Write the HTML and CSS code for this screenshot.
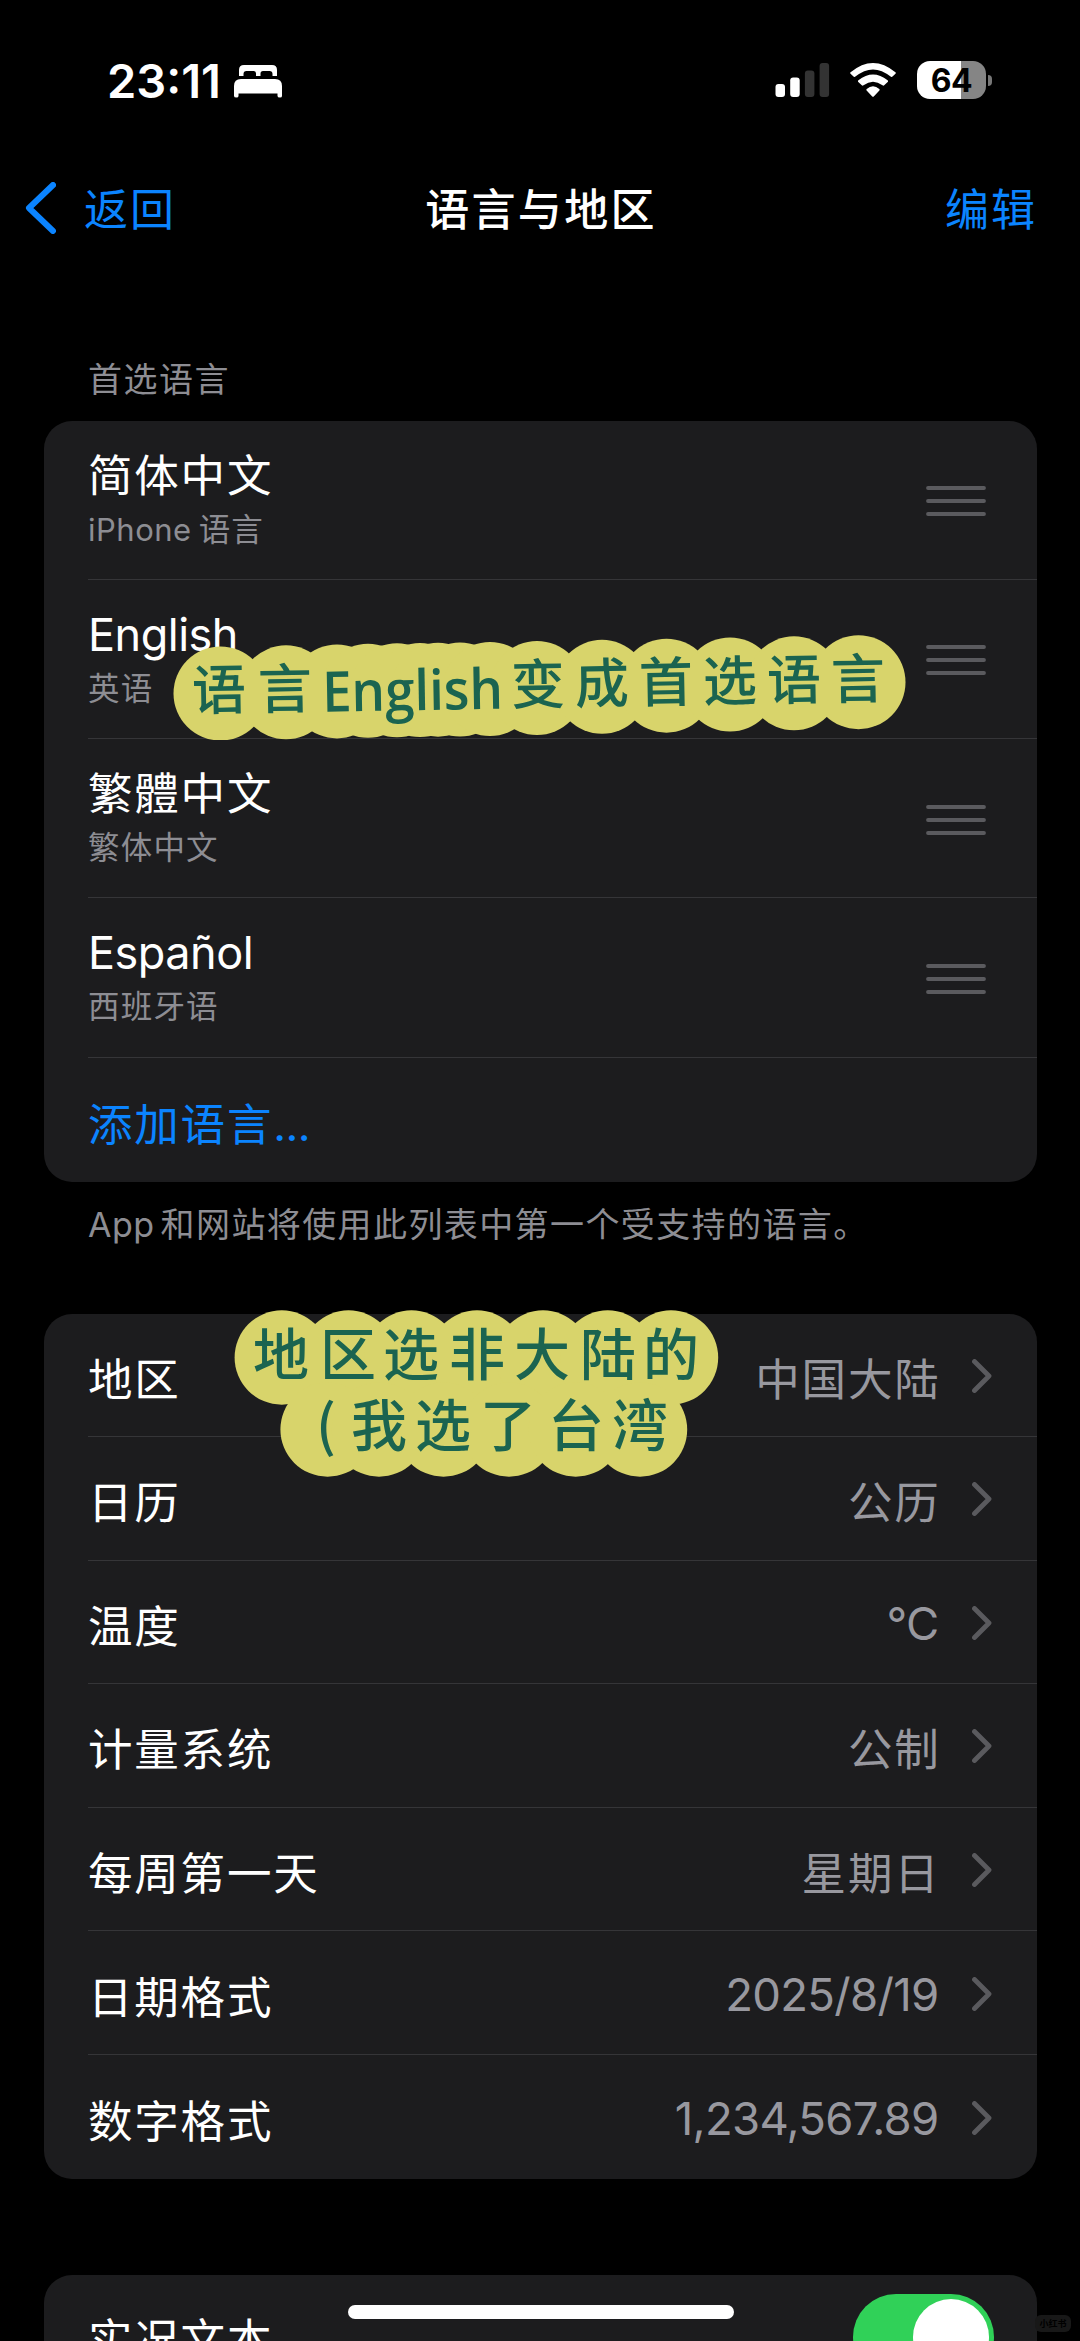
FILE: index.html
```html
<!DOCTYPE html>
<html lang="zh-CN">
<head>
<meta charset="utf-8">
<title>语言与地区</title>
<link rel="stylesheet" href="styles.css">
</head>
<body>
<svg class="defs" width="0" height="0" aria-hidden="true">
  <symbol id="grip" viewBox="0 0 60 32"><path d="M2 3H58M2 16H58M2 29H58" fill="none" stroke="currentColor" stroke-width="3.8" stroke-linecap="round"/></symbol>
  <symbol id="chev" viewBox="0 0 20 34"><path d="M2.5 2.5L17 17L2.5 31.5" fill="none" stroke="currentColor" stroke-width="4.8" stroke-linecap="round" stroke-linejoin="round"/></symbol>
</svg>
<div class="screen">
  <header class="status">
    <span class="time">23:11</span>
    <svg class="bed" viewBox="0 0 48 33"><path d="M5 11V5Q5 0 10 0H38Q43 0 43 5V11H38.5V9Q38.5 6 35.500 6H29Q26.500 6 26.500 8.500V11H22V8.500Q22 6 19.500 6H12.500Q9.500 6 9.500 9V11ZM0 31V21Q0 14 7 14H41Q48 14 48 21V31Q48 32.500 46 32.500Q43.500 32.500 43.500 31V28.500H4.500V31Q4.500 32.500 2.500 32.500Q0 32.500 0 31Z" fill="#fff"/></svg>
    <div class="indicators">
      <svg class="signal" viewBox="0 0 55 34"><g fill="#fff"><rect x="0.500" y="21" width="9.500" height="13" rx="3"/><rect x="15.200" y="14.500" width="9.500" height="19.500" rx="3"/></g><g fill="#333"><rect x="29.900" y="7.500" width="9.500" height="26.500" rx="3"/><rect x="44.600" y="0" width="9.500" height="34" rx="3"/></g></svg>
      <svg class="wifi" viewBox="0 0 46 34"><path d="M0.600 9.300Q23 -9.300 45.400 9.300Q46.200 10 45.500 10.700L42.200 13.700Q41.400 14.300 40.600 13.600Q23 -0.800 5.400 13.600Q4.600 14.300 3.800 13.700L0.500 10.700Q-0.200 10 0.600 9.300ZM8.400 17.300Q23 5.800 37.600 17.300Q38.500 18.100 37.700 18.900L34.200 22.300Q33.400 23 32.500 22.300Q23 15.200 13.500 22.300Q12.600 23 11.800 22.300L8.300 18.900Q7.500 18.100 8.400 17.300ZM16.700 26Q23 20.600 29.300 26Q30 26.700 29.400 27.400L24 33.300Q23 34.300 22 33.300L16.600 27.400Q16 26.700 16.700 26Z" fill="#fff"/></svg>
      <div class="battery"><div class="cell">64</div><div class="nub"></div></div>
    </div>
  </header>

  <nav class="nav">
    <a class="back"><svg class="back-arrow" viewBox="0 0 31 52"><path d="M28 3L4 26L28 49" fill="none" stroke="currentColor" stroke-width="6" stroke-linecap="round" stroke-linejoin="round"/></svg><span class="label">返回</span></a>
    <h1 class="title">语言与地区</h1>
    <a class="edit">编辑</a>
  </nav>

  <main>
    <h2 class="caption">首选语言</h2>
    <section class="card languages">
      <div class="row"><div class="names"><span class="name">简体中文</span><span class="sub"><span class="latin">iPhone</span>语言</span></div><svg class="grip"><use href="#grip"/></svg></div>
      <div class="row"><div class="names"><span class="name en">English</span><span class="sub">英语</span></div><svg class="grip"><use href="#grip"/></svg></div>
      <div class="row"><div class="names"><span class="name" lang="zh-TW">繁體中文</span><span class="sub">繁体中文</span></div><svg class="grip"><use href="#grip"/></svg></div>
      <div class="row"><div class="names"><span class="name en">Español</span><span class="sub">西班牙语</span></div><svg class="grip"><use href="#grip"/></svg></div>
      <div class="row add"><span>添加语言<span class="dots">...</span></span></div>
    </section>
    <p class="footnote"><span class="latin">App</span>和网站将使用此列表中第一个受支持的语言。</p>

    <section class="card formats">
      <div class="row"><span class="name">地区</span><span class="value">中国大陆</span><svg class="chev"><use href="#chev"/></svg></div>
      <div class="row"><span class="name">日历</span><span class="value">公历</span><svg class="chev"><use href="#chev"/></svg></div>
      <div class="row"><span class="name">温度</span><span class="value num">°C</span><svg class="chev"><use href="#chev"/></svg></div>
      <div class="row"><span class="name">计量系统</span><span class="value">公制</span><svg class="chev"><use href="#chev"/></svg></div>
      <div class="row"><span class="name">每周第一天</span><span class="value">星期日</span><svg class="chev"><use href="#chev"/></svg></div>
      <div class="row"><span class="name">日期格式</span><span class="value num">2025/8/19</span><svg class="chev"><use href="#chev"/></svg></div>
      <div class="row"><span class="name">数字格式</span><span class="value num">1,234,567.89</span><svg class="chev"><use href="#chev"/></svg></div>
    </section>

    <section class="card live">
      <div class="row"><span class="name">实况文本</span><span class="toggle"><span class="knob"></span></span></div>
    </section>
  </main>

  <svg class="note note-language" viewBox="0 0 740 110">
    <g class="cloud" transform="translate(-170 -630)">
      <circle cx="220.500" cy="693.500" r="47"/><circle cx="286" cy="692.300" r="47"/><circle cx="337" cy="691.400" r="47"/><circle cx="368" cy="690.800" r="47"/><circle cx="397" cy="690.300" r="47"/><circle cx="420" cy="690" r="47"/><circle cx="438" cy="689.700" r="47"/><circle cx="460" cy="689.500" r="47"/><circle cx="490" cy="689" r="47"/><circle cx="537" cy="688" r="47"/><circle cx="602" cy="686.800" r="47"/><circle cx="666.500" cy="685.700" r="47"/><circle cx="730" cy="684.500" r="47"/><circle cx="794" cy="683.300" r="47"/><circle cx="858.500" cy="682.200" r="47"/>
    </g>
    <g transform="translate(-170 -630) rotate(-1 540 688)">
      <text class="ink" y="704" x="219 285">语言</text>
      <text class="ink-latin" x="322" y="708" textLength="181" lengthAdjust="spacingAndGlyphs">English</text>
      <text class="ink" y="704" x="538 602 666 730 794 858">变成首选语言</text>
    </g>
  </svg>
  <svg class="note note-region" viewBox="0 0 500 180">
    <g class="cloud" transform="translate(-230 -1300)">
      <circle cx="281.800" cy="1357.500" r="47.200"/><circle cx="348.500" cy="1357.500" r="47.200"/><circle cx="411.500" cy="1357.500" r="47.200"/><circle cx="477" cy="1357.500" r="47.200"/><circle cx="543" cy="1357.500" r="47.200"/><circle cx="607.700" cy="1357.500" r="47.200"/><circle cx="671" cy="1357.500" r="47.200"/>
      <circle cx="327.600" cy="1429.500" r="47.200"/><circle cx="379" cy="1429.500" r="47.200"/><circle cx="443.500" cy="1429.500" r="47.200"/><circle cx="509" cy="1429.500" r="47.200"/><circle cx="575.700" cy="1429.500" r="47.200"/><circle cx="640" cy="1429.500" r="47.200"/>
    </g>
    <g transform="translate(-230 -1300)">
      <text class="ink wide" y="1375" x="281 348 411 477 542 608 671">地区选非大陆的</text>
      <text class="ink wide" y="1446" x="326 379 443 508 576 640">(我选了台湾</text>
    </g>
  </svg>
  <div class="home-bar"></div>
  <div class="stamp">小红书</div>
</div>
</body>
</html>
```
FILE: styles.css
```css
* { box-sizing: border-box; }
body {
  margin: 0;
  background: #000;
  color: #fff;
  font-family: Inter, "Noto Sans CJK SC", sans-serif;
}
.defs { position: absolute; }
.screen { position: relative; width: 1080px; height: 2341px; overflow: hidden; }

.status { display: flex; align-items: flex-start; height: 128px; padding: 61px 88px 0 107px; }
.time { width: 127px; font-size: 47px; font-weight: 600; line-height: 39px; letter-spacing: 0; white-space: nowrap; }
.bed { width: 48px; height: 33px; margin-top: 4px; }
.indicators { display: flex; margin-left: auto; }
.signal { width: 55px; height: 34px; margin-top: 2px; }
.wifi { width: 46px; height: 34px; margin: 2px 21px 0 20px; }
.battery { display: flex; align-items: center; gap: 2px; height: 38px; }
.cell {
  width: 69px; height: 38px; border-radius: 13px;
  background: linear-gradient(90deg, #fff 44px, #858585 44px);
  color: #000; font-size: 32px; font-weight: 700; line-height: 39px; text-align: center; letter-spacing: -0.5px;
}
.nub { width: 4px; height: 11px; border-radius: 0 5px 5px 0; background: #777; }

.nav { display: grid; grid-template-columns: 1fr auto 1fr; align-items: center; height: 160px; padding: 0 43px 0 25px; font-size: 44px; letter-spacing: 2px; }
.back, .edit { color: #0b84ff; }
.back { display: flex; align-items: center; gap: 28px; }
.back-arrow { width: 31px; height: 52px; }
.label, .edit, .title { padding-bottom: 3px; }
.edit { justify-self: end; }
.title { margin: 0 0 0 20px; font-size: 44px; font-weight: 500; letter-spacing: 2.300px; }

.caption { margin: 0; height: 132.500px; padding: 67px 0 0 88px; color: #8d8d93; font-size: 34px; font-weight: 400; line-height: 50px; letter-spacing: 1.500px; }
.card { display: grid; margin: 0 43.500px 0 44px; border-radius: 28px; background: #1c1c1e; }
.row { display: flex; align-items: center; margin-left: 44px; border-bottom: 1px solid #353538; }
.row:last-child { border-bottom: 0; }
.name { font-size: 44.500px; letter-spacing: 1.800px; }
.name.en { font-size: 45px; letter-spacing: -0.5px; }

.languages { height: 761px; grid-template-rows: repeat(4, 159.300px) 1fr; }
.names { display: flex; flex-direction: column; height: 100%; padding-top: 26px; }
.names .name { line-height: 58px; }
.sub { color: #8d8d93; font-size: 31.500px; line-height: 50px; letter-spacing: 1.200px; }
.sub .latin { margin-right: 7px; font-size: 31px; letter-spacing: 0.500px; }
.grip { width: 60px; height: 32px; margin: 3px 50.500px 0 auto; color: #5a5a5e; }
.add { padding-top: 3px; color: #0b84ff; font-size: 44.500px; letter-spacing: 1.800px; }
.dots { letter-spacing: -0.5px; }

.footnote { margin: 0; height: 132px; padding: 18px 0 0 88px; color: #8d8d93; font-size: 34px; line-height: 50px; letter-spacing: 1.400px; }
.footnote .latin { margin-right: 6px; letter-spacing: 0.5px; }

.formats { height: 865px; grid-template-rows: repeat(7, 1fr); }
.formats .name, .value { padding-top: 3px; }
.value { margin-left: auto; color: #98989f; font-size: 44.500px; letter-spacing: 1.800px; }
.value.num { font-size: 45.500px; letter-spacing: -0.7px; }
.chev { width: 20px; height: 34px; margin: 2px 45px 0 31px; color: #5a5a5e; }
.num + .chev { margin-left: 33px; }

.live { height: 124px; margin-top: 96px; }
.toggle { display: flex; justify-content: flex-end; width: 141px; height: 86px; margin: 0 43px 0 auto; padding: 5px; border-radius: 43px; background: #30d158; }
.knob { width: 76px; height: 76px; border-radius: 50%; background: #fff; }

.note { position: absolute; }
.note-language { left: 170px; top: 630px; width: 740px; height: 110px; }
.note-region { left: 230px; top: 1300px; width: 500px; height: 180px; }
.cloud { fill: #d8d46b; }
.ink, .ink-latin { fill: #1b6450; font-weight: 500; }
.ink { font-family: "Noto Sans CJK SC", sans-serif; font-size: 54px; text-anchor: middle; }
.ink.wide { font-size: 56px; }
.ink-latin { font-family: "Open Sans", sans-serif; font-size: 56px; font-weight: 600; }
.home-bar { position: absolute; left: 348px; top: 2305px; width: 386px; height: 14px; border-radius: 7px; background: #fff; }
.stamp { position: absolute; left: 1035px; top: 2315px; width: 36px; height: 17px; border-radius: 6px; background: #181818; color: #000; font-size: 9px; font-weight: 700; line-height: 17px; text-align: center; }
```
